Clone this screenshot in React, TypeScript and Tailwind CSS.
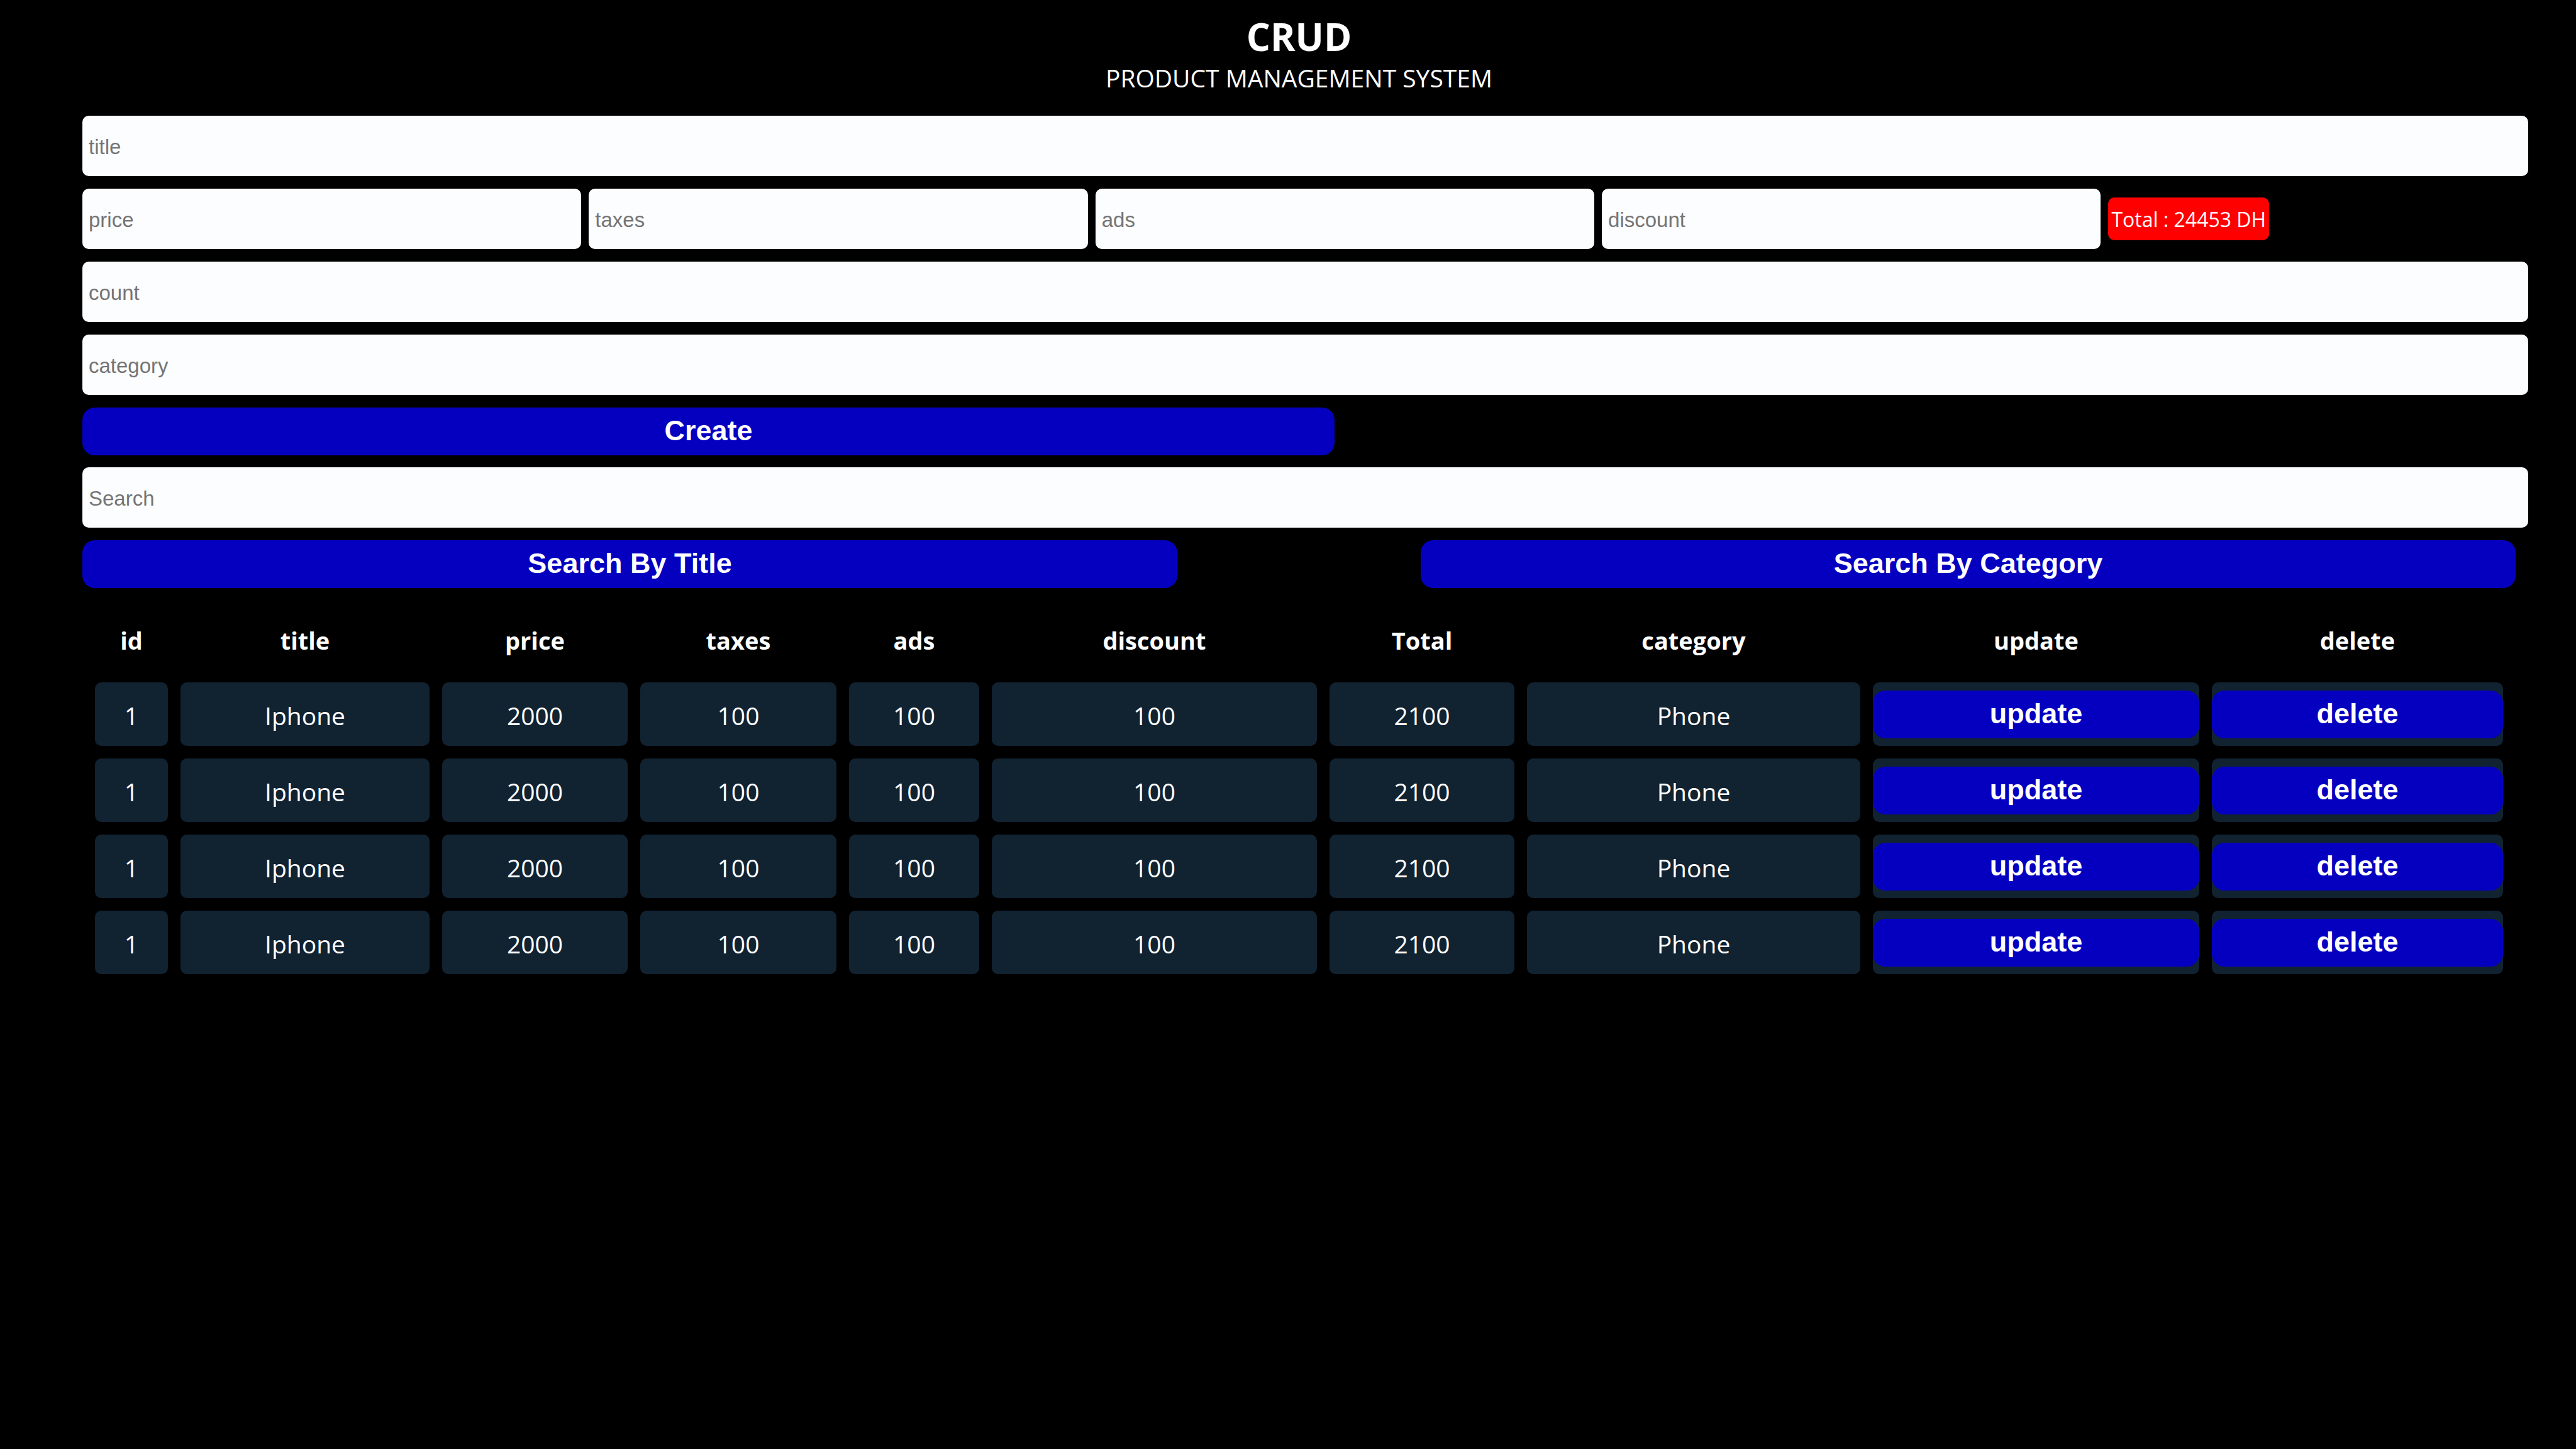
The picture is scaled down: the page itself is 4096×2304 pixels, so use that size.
import React from "react";

type Product = {
  id: number;
  title: string;
  price: number;
  taxes: number;
  ads: number;
  discount: number;
  total: number;
  category: string;
};

const phone: Product = {
  id: 1,
  title: "Iphone",
  price: 2000,
  taxes: 100,
  ads: 100,
  discount: 100,
  total: 2100,
  category: "Phone",
};

const products: Product[] = [phone, phone, phone, phone];

const columns = [
  { name: "id", width: "w-[116px]" },
  { name: "title", width: "w-[396px]" },
  { name: "price", width: "w-[295px]" },
  { name: "taxes", width: "w-[312px]" },
  { name: "ads", width: "w-[207px]" },
  { name: "discount", width: "w-[517px]" },
  { name: "Total", width: "w-[294px]" },
  { name: "category", width: "w-[530px]" },
  { name: "update", width: "w-[519px]" },
  { name: "delete", width: "w-[463px]" },
];

function Field({ name, type = "text", className = "w-full" }: { name: string; type?: string; className?: string }) {
  return (
    <input
      type={type}
      aria-label={name}
      placeholder={name}
      className={`h-24 rounded-[10px] bg-[#fcfdff] px-[10px] pt-[3px] font-['Liberation_Sans',Arial,sans-serif] text-[33px] text-black outline-none placeholder:text-[#757575] ${className}`}
    />
  );
}

function Action({ children, className = "w-full", type = "button" }: { children: React.ReactNode; className?: string; type?: "button" | "submit" }) {
  return (
    <button
      type={type}
      className={`h-[76px] rounded-[20px] bg-[#0500c0] pb-[3px] font-['Liberation_Sans',Arial,sans-serif] text-[45px] leading-none font-bold text-white ${className}`}
    >
      {children}
    </button>
  );
}

function Cell({ children }: { children: React.ReactNode }) {
  return <td className="h-[101px] rounded-[10px] bg-[#112231] pt-1 text-center align-middle">{children}</td>;
}

export default function App() {
  return (
    <div className="min-h-screen bg-black pr-[76px] pl-[131px] font-['Open_Sans','Noto_Sans',sans-serif] text-[39px] leading-[52px] text-white">
      <header className="pt-[18px] pr-5 text-center">
        <h1 className="text-[60px] leading-[80px] font-bold">CRUD</h1>
        <p>PRODUCT MANAGEMENT SYSTEM</p>
      </header>

      <main>
        <form className="mt-[34px] flex flex-col gap-5" onSubmit={(e) => e.preventDefault()}>
          <Field name="title" />
          <div className="flex items-center gap-3">
            <Field name="price" className="w-[20.4%]" />
            <Field name="taxes" className="w-[20.4%]" />
            <Field name="ads" className="w-[20.4%]" />
            <Field name="discount" className="w-[20.4%]" />
            <output className="rounded-[10px] bg-[#ff0000] px-[5px] pt-[2px] text-[32px] leading-[66px] whitespace-nowrap">Total : 24453 DH</output>
          </div>
          <Field name="count" />
          <Field name="category" />
          <Action type="submit" className="w-[51.2%]">Create</Action>
        </form>

        <section className="mt-[19px] flex flex-col gap-5">
          <Field name="Search" />
          <div className="flex justify-between pr-5">
            <Action className="w-[45%]">Search By Title</Action>
            <Action className="w-[45%]">Search By Category</Action>
          </div>
        </section>

        <section className="mt-2 pr-5">
          <table className="w-full table-fixed border-separate border-spacing-5">
            <colgroup>
              {columns.map((c) => (
                <col key={c.name} className={c.width} />
              ))}
            </colgroup>
            <thead>
              <tr>
                {columns.map((c) => (
                  <th key={c.name} scope="col" className="h-[102px] pt-[8px] text-center align-middle text-[38px] font-bold">
                    {c.name}
                  </th>
                ))}
              </tr>
            </thead>
            <tbody>
              {products.map((p, i) => (
                <tr key={i}>
                  <Cell>{p.id}</Cell>
                  <Cell>{p.title}</Cell>
                  <Cell>{p.price}</Cell>
                  <Cell>{p.taxes}</Cell>
                  <Cell>{p.ads}</Cell>
                  <Cell>{p.discount}</Cell>
                  <Cell>{p.total}</Cell>
                  <Cell>{p.category}</Cell>
                  <td className="rounded-[10px] bg-[#112231] align-middle">
                    <Action className="block w-full">update</Action>
                  </td>
                  <td className="rounded-[10px] bg-[#112231] align-middle">
                    <Action className="block w-full">delete</Action>
                  </td>
                </tr>
              ))}
            </tbody>
          </table>
        </section>
      </main>
    </div>
  );
}
